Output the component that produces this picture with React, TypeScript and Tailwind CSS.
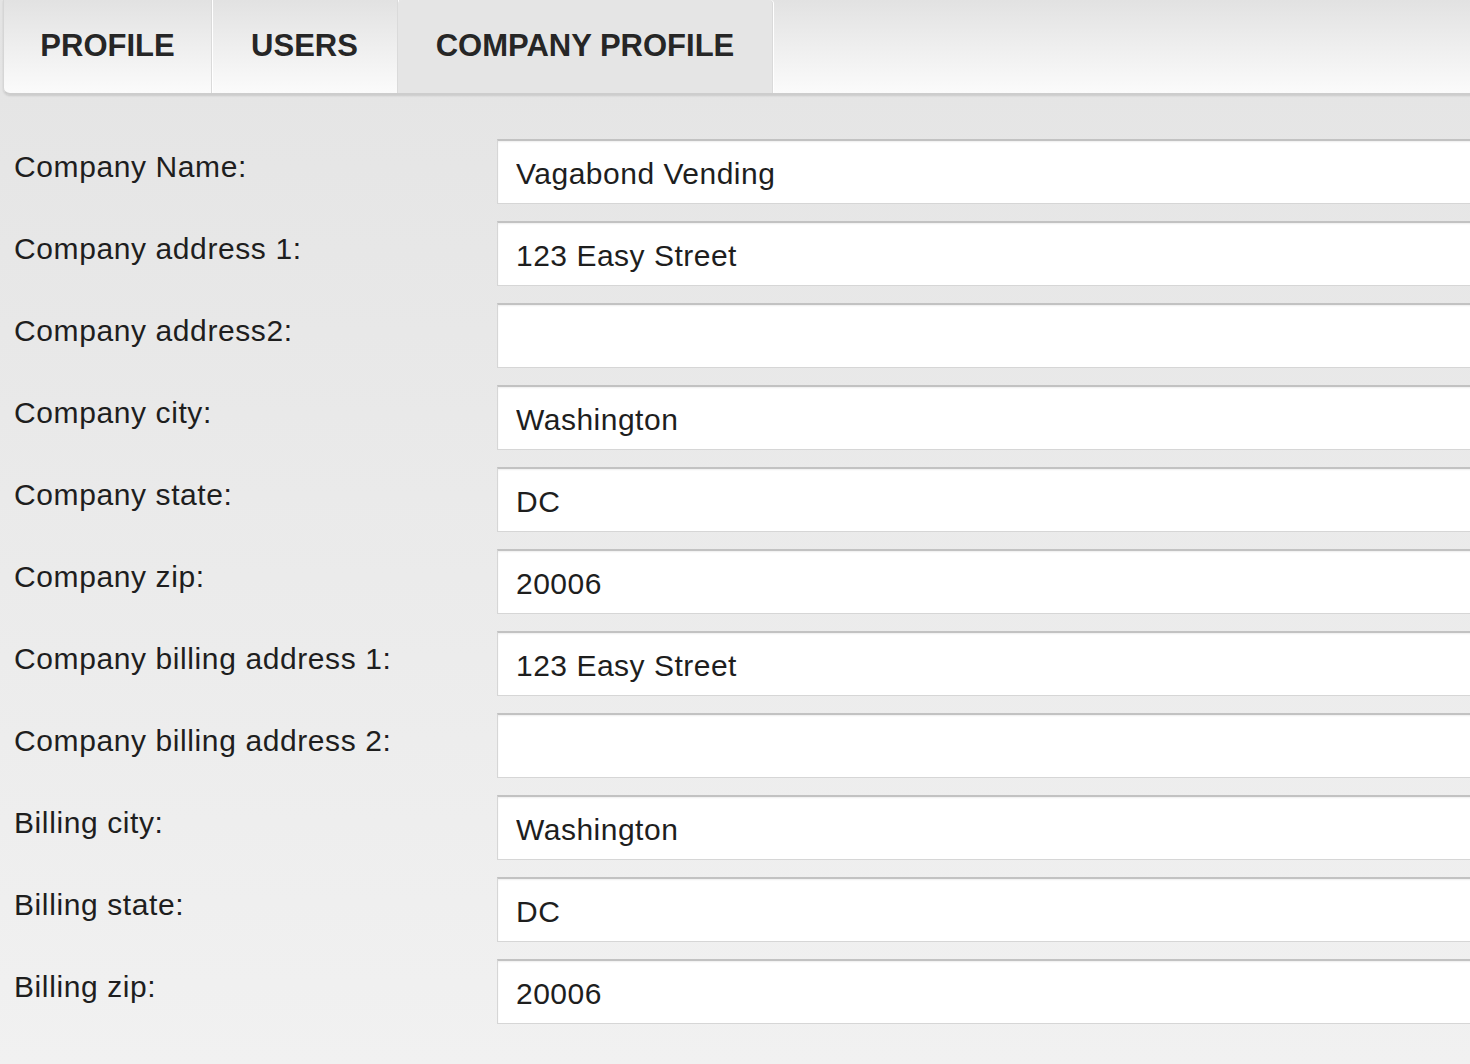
import React, { useState } from 'react';

type Field = { label: string; value: string };

const fields: Field[] = [
  { label: 'Company Name:', value: 'Vagabond Vending' },
  { label: 'Company address 1:', value: '123 Easy Street' },
  { label: 'Company address2:', value: '' },
  { label: 'Company city:', value: 'Washington' },
  { label: 'Company state:', value: 'DC' },
  { label: 'Company zip:', value: '20006' },
  { label: 'Company billing address 1:', value: '123 Easy Street' },
  { label: 'Company billing address 2:', value: '' },
  { label: 'Billing city:', value: 'Washington' },
  { label: 'Billing state:', value: 'DC' },
  { label: 'Billing zip:', value: '20006' },
];

const tabs = [
  { id: 'profile', title: 'PROFILE', width: 'w-[208px]' },
  { id: 'users', title: 'USERS', width: 'w-[186px]' },
  { id: 'company', title: 'COMPANY PROFILE', width: 'w-[375px]' },
];

export default function App() {
  const [active, setActive] = useState('company');
  const [values, setValues] = useState(fields.map((f) => f.value));

  return (
    <div className="min-h-[1064px] w-full overflow-hidden bg-linear-to-b from-[#e4e4e4] to-[#f1f1f1] font-['Liberation_Sans',Arial,sans-serif] text-[#1e1e1e]">
      {/* Tab strip */}
      <div className="ml-[3px] flex h-[95px] w-[1480px] rounded-bl-[7px] border-b-2 border-l border-[#cdcdcd] border-l-[#d6d6d6] bg-linear-to-b from-[#e2e2e2] to-[#fbfbfb] shadow-[0_1px_2px_rgba(0,0,0,0.12)]">
        {tabs.map((tab) => (
          <button
            key={tab.id}
            onClick={() => setActive(tab.id)}
            className={`${tab.width} flex h-full items-center justify-center border-r border-[#dadada] pb-[1px] text-[31px] font-bold tracking-[0px] text-[#262626] shadow-[1px_0_0_#ffffff] ${
              active === tab.id ? 'rounded-t-[4px] bg-[#e5e5e5]' : ''
            }`}
          >
            {tab.title}
          </button>
        ))}
      </div>

      {/* Company form */}
      <div className="flex flex-col gap-[17px] pt-[44px] pl-[14px]">
        {fields.map((field, i) => (
          <div key={field.label} className="flex">
            <label className="w-[483px] shrink-0 pt-[11px] text-[30px] leading-[34px] tracking-[0.6px]">
              {field.label}
            </label>
            <input
              value={values[i]}
              onChange={(e) => {
                const next = [...values];
                next[i] = e.target.value;
                setValues(next);
              }}
              className="h-[65px] w-[1000px] shrink-0 border border-t-2 border-[#d6d6d6] border-t-[#c2c2c2] bg-white pt-[4px] pl-[18px] text-[30px] tracking-[0.5px] text-[#1e1e1e] shadow-[inset_0_1px_2px_rgba(0,0,0,0.07)] outline-none"
            />
          </div>
        ))}
      </div>
    </div>
  );
}
